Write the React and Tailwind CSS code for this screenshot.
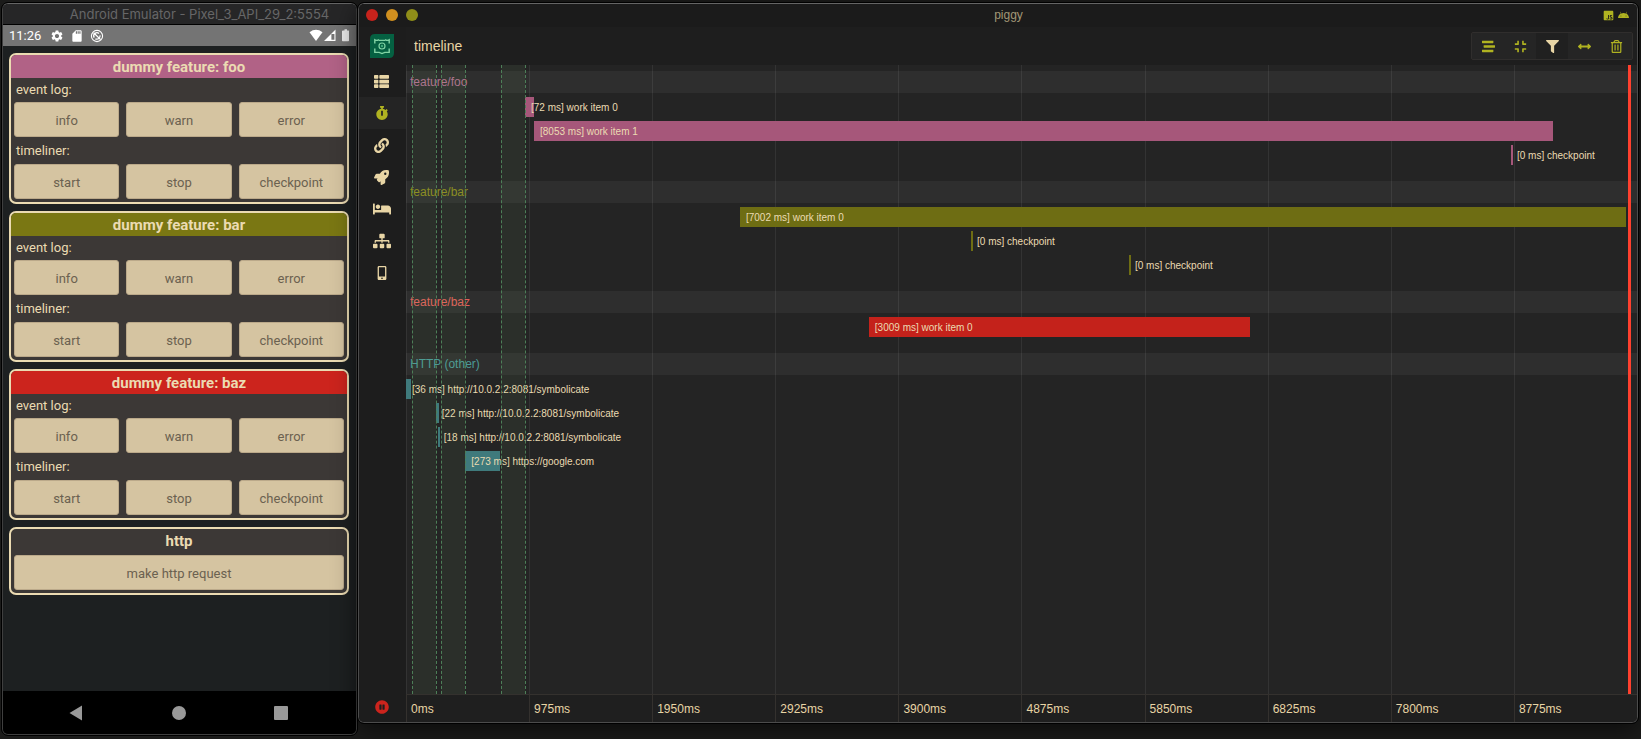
import React from "react";
import {
  FaThList, FaStopwatch, FaLink, FaRocket, FaBed, FaSitemap, FaMobileAlt, FaPauseCircle,
  FaStream, FaCompress, FaFilter, FaArrowsAltH, FaRegTrashAlt, FaJsSquare, FaAndroid,
} from "react-icons/fa";
import { MdSettings, MdSdCard } from "react-icons/md";

const features = [
  { name: "foo", color: "bg-[#b16286]" },
  { name: "bar", color: "bg-[#7a7713]" },
  { name: "baz", color: "bg-[#cc241d]" },
];

function PhoneButton({ children }) {
  return (
    <button type="button" className="h-[35px] flex-1 basis-0 rounded-[3px] border border-[#bba98a] bg-[#d5c4a1] pt-[2px] text-[13px] leading-4 text-[#6b6150]">
      {children}
    </button>
  );
}

function Card({ title, color, children }) {
  return (
    <section className="overflow-hidden rounded-[7px] border-2 border-[#ebdbb2] bg-[#3c3836] pb-[3px]">
      <h2 className={"h-[23px] text-center text-[15px] font-bold leading-[25px] text-[#ebdbb2] " + color}>{title}</h2>
      {children}
    </section>
  );
}

function StatusBar() {
  return (
    <div className="flex h-[21px] items-center bg-[#747474] px-[6px] text-[13px] text-white">
      <span className="w-[41px]">11:26</span>
      <span className="flex flex-1 items-center gap-[6px]">
        <MdSettings size={14} />
        <MdSdCard size={14} />
        <svg width="14" height="14" viewBox="0 0 14 14" fill="none" stroke="currentColor" aria-hidden="true">
          <circle cx="7" cy="7" r="5.6" strokeWidth="1.1" />
          <path d="M4.2 8.6 A3.2 3.2 0 0 1 9 4.5 M5.4 9.8 A3.2 3.2 0 0 0 10 6.4" strokeWidth="1.3" />
          <path d="M3.6 3.8 L10.6 10.6" strokeWidth="1.3" />
        </svg>
      </span>
      <svg width="41" height="13" viewBox="0 0 41 13" fill="currentColor" aria-hidden="true">
        <path d="M0.5 3.2 Q7 -1.6 13.5 3.2 L7 12 Z" />
        <path fillRule="evenodd" d="M26.5 0.5 V12 H15 Z M25.4 5 H22.4 V10.8 H25.4 Z" />
        <path d="M34 1.5 H35.5 V0.3 H38 V1.5 H39.5 Q40 1.5 40 2.2 V11.5 Q40 12.2 39.3 12.2 H33.7 Q33 12.2 33 11.5 V2.2 Q33 1.5 34 1.5 Z" opacity=".85" />
      </svg>
    </div>
  );
}

function Phone() {
  return (
    <div className="mb-1 flex w-[355px] shrink-0 flex-col overflow-hidden rounded-[6px] border border-[#3f3f3f] border-t-[#656565] bg-[#1d2021] font-[Roboto,sans-serif] outline outline-black">
      <header className="h-[21px] border-b border-black bg-[#262627] pl-10 text-center font-[Inter,sans-serif] text-[13px] leading-[21px] text-[#666667]">
        Android Emulator - Pixel_3_API_29_2:5554
      </header>
      <StatusBar />
      <main className="flex flex-1 flex-col gap-[7px] pl-[6px] pr-[7px] pt-[7px]">
        {features.map((f) => (
          <Card key={f.name} title={"dummy feature: " + f.name} color={f.color}>
            <p className="h-6 px-[5px] text-[13px] leading-6 text-[#ebdbb2]">event log:</p>
            <div className="flex gap-[7px] px-[3px]">
              <PhoneButton>info</PhoneButton>
              <PhoneButton>warn</PhoneButton>
              <PhoneButton>error</PhoneButton>
            </div>
            <p className="h-[27px] px-[5px] text-[13px] leading-7 text-[#ebdbb2]">timeliner:</p>
            <div className="flex gap-[7px] px-[3px]">
              <PhoneButton>start</PhoneButton>
              <PhoneButton>stop</PhoneButton>
              <PhoneButton>checkpoint</PhoneButton>
            </div>
          </Card>
        ))}
        <Card title="http" color="mb-[3px]">
          <div className="flex px-[3px]">
            <PhoneButton>make http request</PhoneButton>
          </div>
        </Card>
      </main>
      <nav className="flex h-[43px] items-center justify-between bg-black pl-[66px] pr-[68px] text-[#999]">
        <button type="button" aria-label="Back">
          <svg width="14" height="16" viewBox="0 0 14 16" fill="currentColor"><path d="M0.5 8 L13 0.5 V15.5 Z" /></svg>
        </button>
        <button type="button" aria-label="Home" className="size-[14px] rounded-full bg-[#999]" />
        <button type="button" aria-label="Overview" className="size-[14px] rounded-[1px] bg-[#999]" />
      </nav>
    </div>
  );
}

const views = [
  ["Events", FaThList, 15],
  ["Timeline", FaStopwatch, 14],
  ["Network", FaLink, 15],
  ["Launch", FaRocket, 15],
  ["Idle", FaBed, 18],
  ["Hierarchy", FaSitemap, 18],
  ["Device", FaMobileAlt, 14],
];

function Sidebar() {
  return (
    <nav className="flex w-[47px] shrink-0 flex-col items-center bg-[#1d1d1d] text-[#e8d5a5]">
      <div className="flex h-[38px] items-center pr-[2px]">
        <svg width="24" height="24" viewBox="0 0 24 24" fill="none" aria-label="piggy">
          <path d="M5 0 H24 V19 Q24 24 19 24 H0 V5 Q0 0 5 0 Z" fill="#056142" />
          <path d="M4.8 9.5 V5.8 Q7 7 9 5.6 M15 5.6 Q17 7 19.2 5.8 V9.5 M4.8 14.5 V18.4 H9.2 L12 19.6 L14.8 18.4 H19.2 V14.5 M9 6.4 H15" stroke="#80d3a4" strokeWidth="1.4" />
          <circle cx="12" cy="12" r="3" stroke="#80d3a4" strokeWidth="1.2" />
          <circle cx="12" cy="12" r="1.2" fill="#3fa777" />
        </svg>
      </div>
      {views.map(([label, Icon, size], i) => (
        <button
          key={label}
          type="button"
          aria-label={label}
          className={"flex h-8 w-full items-center justify-center pr-[2px] " + (i === 1 ? "bg-[#242424] text-[#b0b321]" : "")}
        >
          <Icon size={size} />
        </button>
      ))}
      <button type="button" aria-label="Pause" className="mt-auto mb-2 pr-[2px] text-[#cc241d]">
        <FaPauseCircle size={14} />
      </button>
    </nav>
  );
}

const tools = [
  ["Stack", FaStream],
  ["Compress", FaCompress],
  ["Filter", FaFilter],
  ["Fit width", FaArrowsAltH],
  ["Clear", FaRegTrashAlt],
];

const groups = [
  {
    name: "feature/foo", text: "text-[#b0708f]", bar: "bg-[#a6577a]",
    items: [
      [9.67, 0.73, "[72 ms] work item 0"],
      [10.4, 82.75, "[8053 ms] work item 1"],
      [89.76, 0, "[0 ms] checkpoint"],
    ],
  },
  {
    name: "feature/bar", text: "text-[#8c8b1c]", bar: "bg-[#6e6d13]",
    items: [
      [27.13, 71.97, "[7002 ms] work item 0"],
      [45.9, 0, "[0 ms] checkpoint"],
      [58.73, 0, "[0 ms] checkpoint"],
    ],
  },
  {
    name: "feature/baz", text: "text-[#e0605a]", bar: "bg-[#c4221b]",
    items: [[37.6, 30.95, "[3009 ms] work item 0"]],
  },
  {
    name: "HTTP (other)", text: "text-[#4a9a96]", bar: "bg-[#3f7a7c]",
    items: [
      [0, 0.4, "[36 ms] http://10.0.2.2:8081/symbolicate"],
      [2.42, 0.24, "[22 ms] http://10.0.2.2:8081/symbolicate"],
      [2.58, 0.18, "[18 ms] http://10.0.2.2:8081/symbolicate"],
      [4.82, 2.83, "[273 ms] https://google.com"],
    ],
  },
];

const idleSpans = [0.49, 2.44, 2.84, 4.79, 7.72, 9.67];
const ticks = [0, 975, 1950, 2925, 3900, 4875, 5850, 6825, 7800, 8775];

function Timeline() {
  return (
    <div className="relative flex-1 bg-[#242424] pt-[6px]">
      {groups.map((g) => (
        <section key={g.name} className="pb-4">
          <h2 className={"h-[22px] bg-[#2e2e2e] pl-1 text-[12px] leading-[22px] " + g.text}>{g.name}</h2>
          <ul className="relative z-10 flex flex-col gap-1 pt-1">
            {g.items.map(([start, width, label]) => (
              <li key={start} className="h-5">
                <div
                  className={"h-5 min-w-[2px] whitespace-nowrap text-[10px] leading-[22px] text-[#ebdbb2] " + g.bar}
                  style={{ marginLeft: start + "%", width: width + "%" }}
                >
                  <span className="block w-0 pl-[6px]">{label}</span>
                </div>
              </li>
            ))}
          </ul>
        </section>
      ))}
      <div className="pointer-events-none absolute inset-0 grid grid-cols-10">
        {ticks.map((t) => <div key={t} className="border-l border-white/7" />)}
      </div>
      {idleSpans.map((s, i) => (
        <div
          key={s}
          className={
            "pointer-events-none absolute inset-y-0 z-20 border-l border-dashed border-[#4d7f58] " +
            (i % 2 === 0 ? "w-6 bg-[#8ec07c]/7" : "w-px")
          }
          style={{ left: s + "%" }}
        />
      ))}
      <div className="absolute inset-y-0 right-[6px] z-20 w-[3px] bg-[#ff402e]" />
    </div>
  );
}

function Piggy() {
  return (
    <div className="relative z-10 mb-4 flex min-w-0 flex-1 flex-col overflow-hidden rounded-[6px] border border-[#4c4c4c] border-t-[#656565] bg-[#1f1f1f] font-['Liberation_Sans',Arial,sans-serif] text-[#e8d5a5] shadow-[0_6px_24px_rgba(0,0,0,0.6)] outline outline-black">
      <header className="flex h-[23px] shrink-0 items-center bg-[#1b1b1b] pl-[7px] pr-2 pb-px">
        <div className="flex gap-2">
          <button type="button" aria-label="Close" className="size-3 rounded-full bg-[#c7231c]" />
          <button type="button" aria-label="Minimize" className="size-3 rounded-full bg-[#d1901f]" />
          <button type="button" aria-label="Zoom" className="size-3 rounded-full bg-[#8f8e19]" />
        </div>
        <div className="flex-1 pr-1 text-center text-[12px] leading-5 text-[#a29776]">piggy</div>
        <div className="flex items-center gap-1 text-[#b0b321]">
          <FaJsSquare size={11} />
          <FaAndroid size={11} />
        </div>
      </header>
      <div className="flex flex-1">
        <Sidebar />
        <div className="flex min-w-0 flex-1 flex-col">
          <div className="flex h-[38px] items-center justify-between bg-[#1e1e1e] pl-2 pr-1">
            <h1 className="text-[14px] leading-5">timeline</h1>
            <div className="flex rounded-[2px] border border-[#302e2d] bg-[#252525] text-[#b0b321]">
              {tools.map(([label, Icon], i) => (
                <button
                  key={label}
                  type="button"
                  aria-label={label}
                  className={"flex h-[26px] w-8 items-center justify-center " + (i === 2 ? "bg-[#202020] text-[#e8d5a5]" : "")}
                >
                  <Icon size={13} />
                </button>
              ))}
            </div>
          </div>
          <Timeline />
          <div className="grid h-7 grid-cols-10 border-t border-[#34312e] bg-[#1f1f1f]">
            {ticks.map((t) => (
              <div key={t} className="border-l border-[#34312e] pl-1 text-[12px] leading-7">{t}ms</div>
            ))}
          </div>
        </div>
      </div>
    </div>
  );
}

export default function App() {
  return (
    <div className="flex min-h-screen gap-px bg-[#1b1b1a] pl-[2px] pr-[3px] pt-[3px]">
      <Phone />
      <Piggy />
    </div>
  );
}
